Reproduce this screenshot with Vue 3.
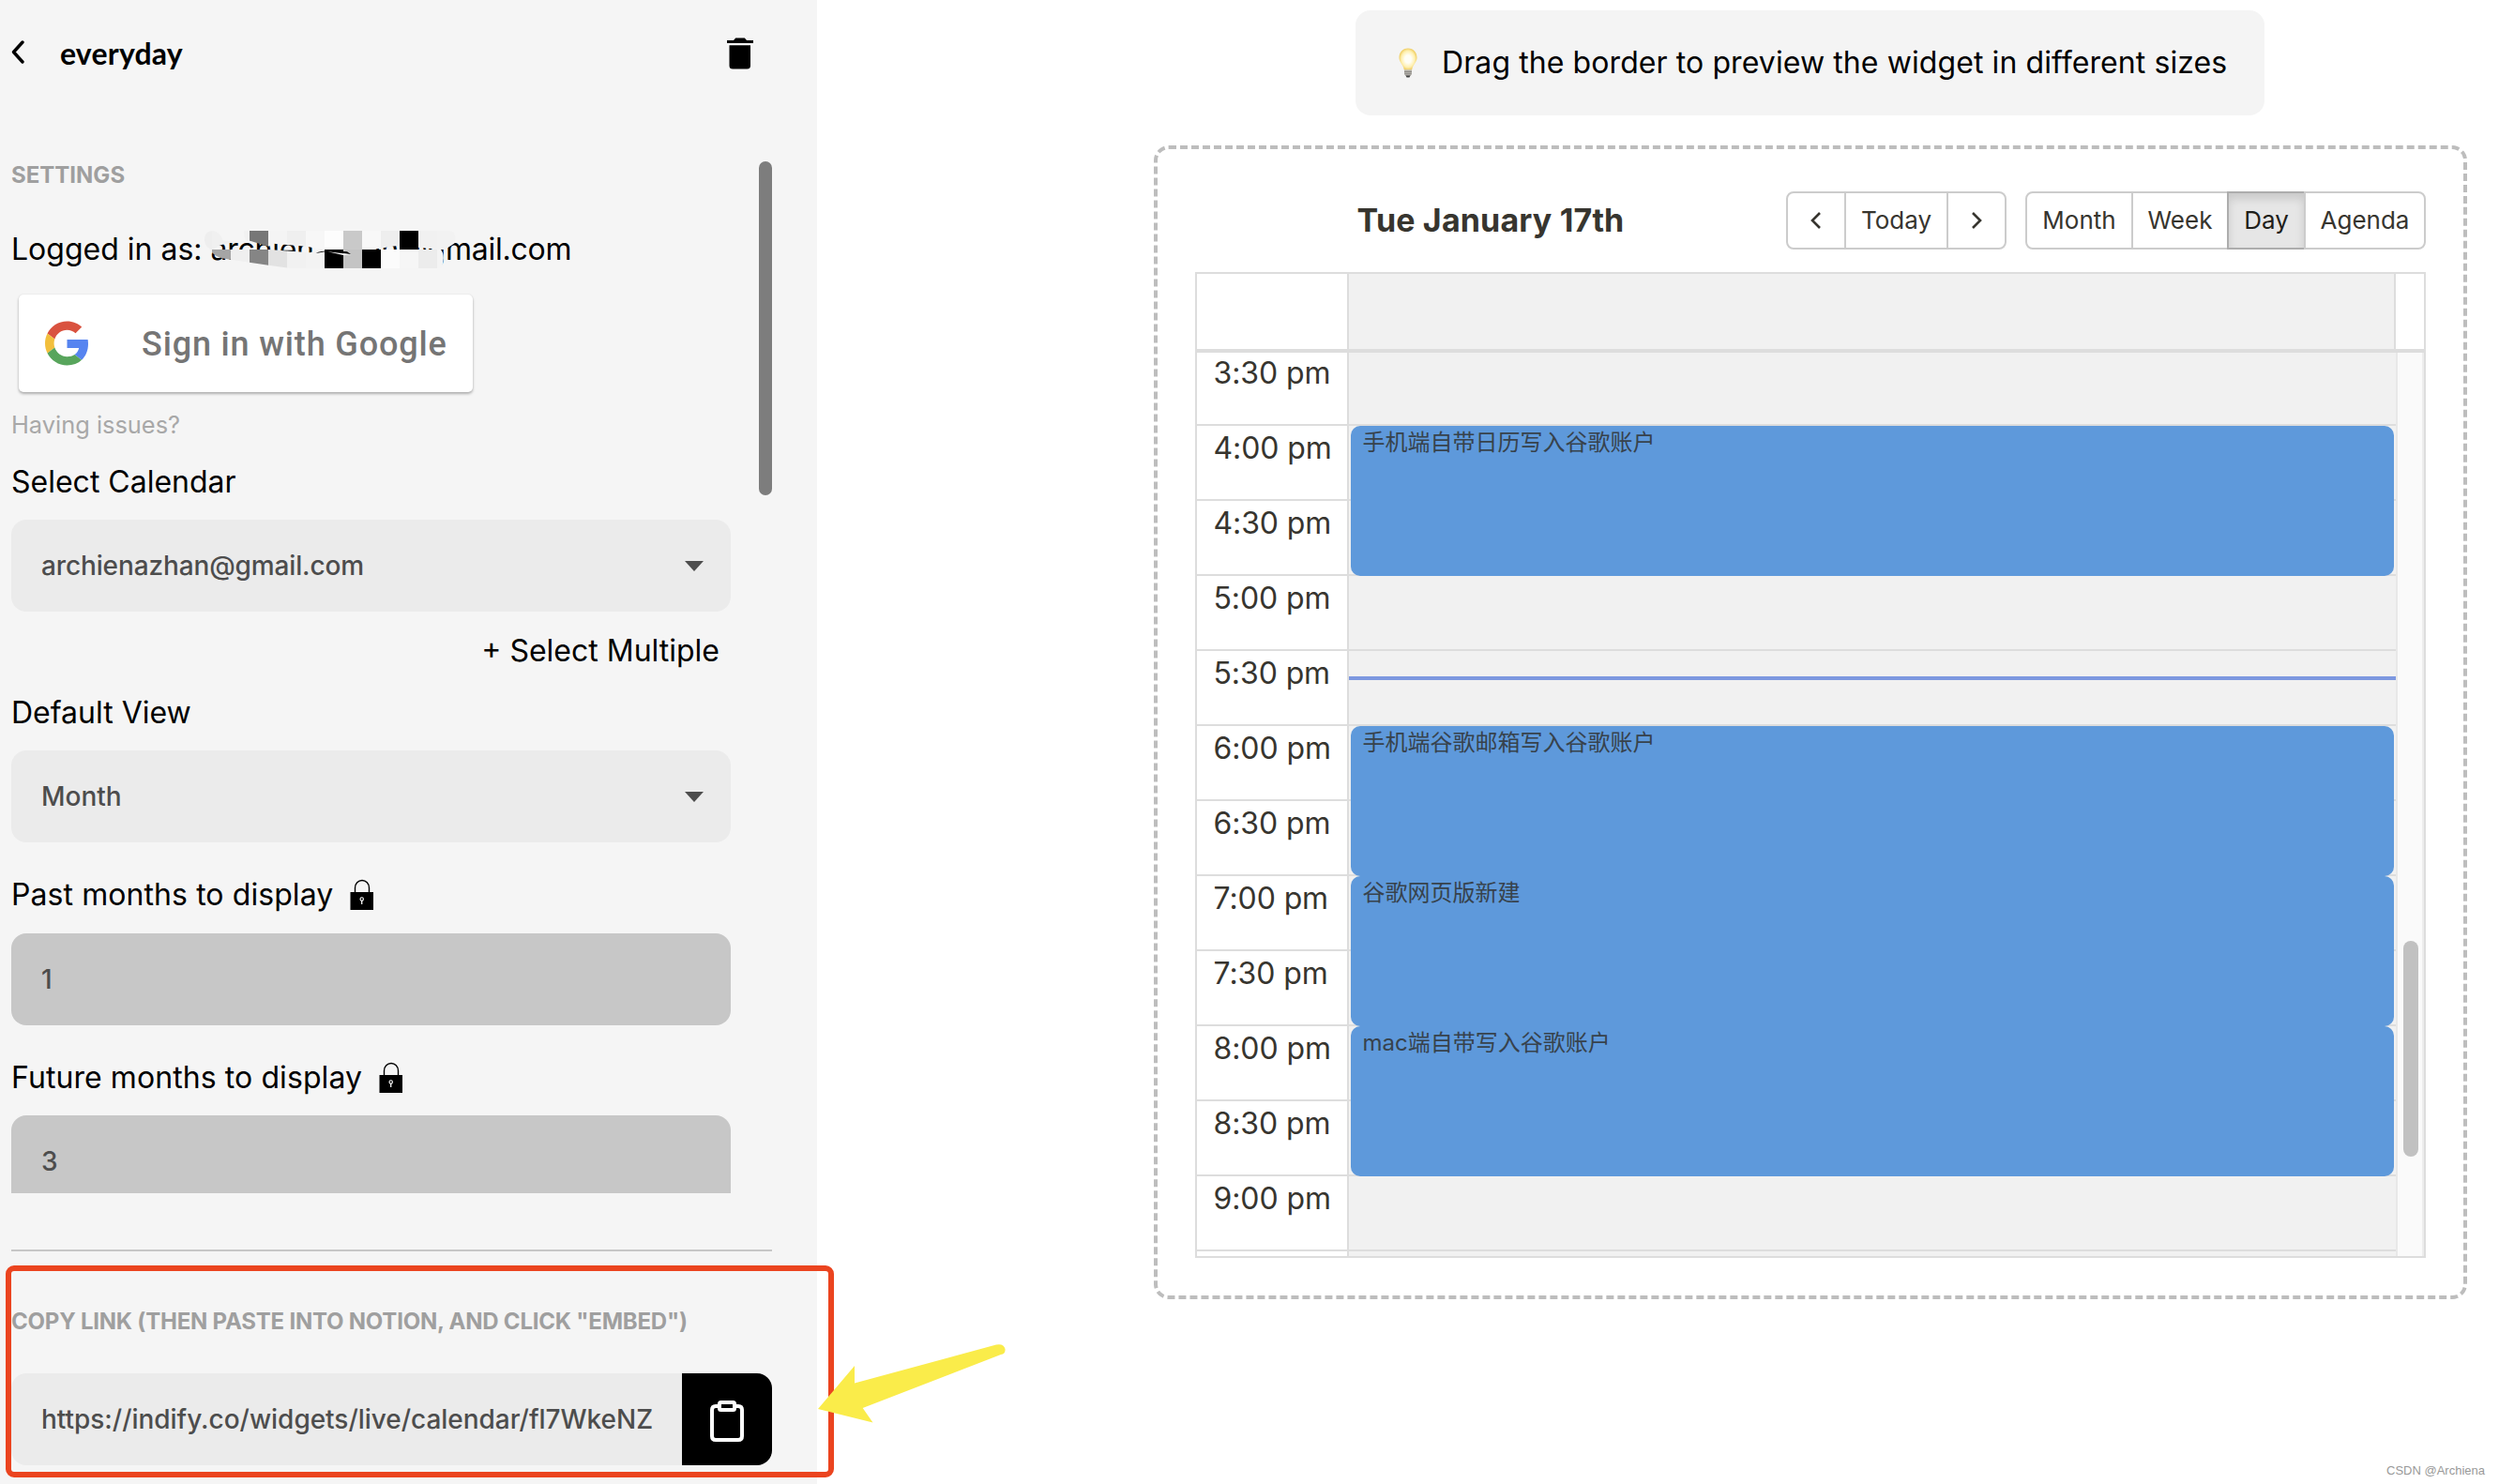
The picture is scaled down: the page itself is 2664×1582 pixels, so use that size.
<template>
  <div class="page">
    <aside class="sidebar">
      <header class="sidebar-header">
        <svg class="back" viewBox="0 0 16 28" width="16" height="28">
          <path d="M12 2 L2.500 12.500 L12 23" fill="none" stroke="#000" stroke-width="3.4" stroke-linecap="round" stroke-linejoin="round" />
        </svg>
        <h1 class="widget-name">everyday</h1>
        <svg class="trash" viewBox="0 0 28 34" width="28" height="34">
          <path d="M0 3 H7 L9.2 0.4 H18.8 L21 3 H28 V6 H0 Z" />
          <path d="M2.5 8.2 H25 V30 Q25 33.6 21.4 33.6 H6.1 Q2.5 33.6 2.5 30 Z" />
        </svg>
      </header>

      <div class="settings">
        <div class="settings-body">
          <div class="caption">SETTINGS</div>
          <div class="account">
            Logged in as: <span class="account-email">{{ email }}</span>
            <svg class="mosaic" viewBox="0 0 840 180" width="280" height="60">
              <defs>
                <clipPath id="brush-top">
                  <path d="M24 60 Q24 30 50 30 Q72 32 84 62 L160 66 Q148 50 150 30 H810 Q832 34 824 70 L790 92 L740 86 L640 78 L560 90 H400 L350 80 L245 71 L228 80 L170 62 L110 68 Q64 74 50 92 Q26 84 24 60 Z" />
                </clipPath>
                <clipPath id="brush-bottom">
                  <path d="M48 90 H230 L360 100 L400 90 H780 Q796 110 782 150 H300 L228 140 L110 123 L80 118 Q56 110 48 98 Z" />
                </clipPath>
              </defs>
              <g clip-path="url(#brush-top)">
                <rect v-for="(c, i) in mosaicTop" :key="i" :x="-12 + i * 60" y="30" width="60.5" height="60.500" :fill="c" />
              </g>
              <g clip-path="url(#brush-bottom)">
                <rect v-for="(c, i) in mosaicBottom" :key="i" :x="48 + i * 60" y="90" width="60.5" height="60" :fill="c" />
              </g>
              <rect x="648" y="30" width="60" height="60" fill="#000" />
              <path d="M380 102 Q402 88 480 97 L492 105 L410 97 Z" fill="#000" />
              <path d="M418 97 L494 106 L468 108 Z" fill="#fff" />
            </svg>
          </div>

          <button class="google">
            <svg viewBox="0 0 48 48" width="47" height="48">
              <path fill="#d9523f" d="M24 9.5c3.54 0 6.71 1.22 9.21 3.6l6.85-6.85C35.9 2.38 30.47 0 24 0 14.62 0 6.51 5.38 2.56 13.22l7.98 6.19C12.43 13.72 17.74 9.5 24 9.5z" />
              <path fill="#5684f0" d="M46.98 24.55c0-1.57-.15-3.09-.38-4.55H24v9.02h12.94c-.58 2.96-2.26 5.48-4.78 7.18l7.73 6c4.51-4.18 7.09-10.36 7.09-17.65z" />
              <path fill="#f2bf3c" d="M10.53 28.59c-.48-1.45-.76-2.99-.76-4.59s.27-3.14.76-4.59l-7.98-6.19C.92 16.46 0 20.12 0 24c0 3.88.92 7.54 2.56 10.78l7.97-6.19z" />
              <path fill="#58a55c" d="M24 48c6.48 0 11.93-2.13 15.89-5.81l-7.73-6c-2.15 1.45-4.92 2.3-8.16 2.3-6.26 0-11.57-4.22-13.47-9.91l-7.98 6.19C6.51 42.62 14.62 48 24 48z" />
            </svg>
            <span>Sign in with Google</span>
          </button>
          <a class="issues">Having issues?</a>

          <div class="label first">Select Calendar</div>
          <div class="box">
            <span class="box-email">{{ email }}</span>
            <svg class="caret" viewBox="0 0 20 11" width="20" height="11"><path d="M0 0 H20 L10 11 Z" /></svg>
          </div>
          <div class="multiple">+ Select Multiple</div>

          <div class="label second">Default View</div>
          <div class="box">
            <span>Month</span>
            <svg class="caret" viewBox="0 0 20 11" width="20" height="11"><path d="M0 0 H20 L10 11 Z" /></svg>
          </div>

          <template v-for="field in lockedFields" :key="field.name">
            <div class="label locked">
              <span>{{ field.name }}</span>
              <svg viewBox="0 0 26 34" width="26" height="34">
                <path d="M5.5 15 V9.5 A7.5 8 0 0 1 20.500 9.5 V15" fill="none" stroke="#000" stroke-width="1.4" />
                <rect x="0.500" y="14" width="24.500" height="19" />
                <circle cx="12.700" cy="21.500" r="1.700" fill="none" stroke="#fff" stroke-width="1.100" />
                <path d="M12.700 23 V27" stroke="#fff" stroke-width="1.300" />
              </svg>
            </div>
            <div class="box disabled">{{ field.value }}</div>
          </template>
        </div>
        <div class="settings-thumb"></div>
      </div>

      <footer class="copy">
        <div class="caption tight">COPY LINK (THEN PASTE INTO NOTION, AND CLICK "EMBED")</div>
        <div class="copy-row">
          <div class="copy-url">https://indify.co/widgets/live/calendar/fl7WkeNZ</div>
          <button class="copy-button">
            <svg viewBox="0 0 36 44" width="36" height="44" fill="none" stroke="#fff" stroke-width="4" stroke-linejoin="round">
              <path d="M10 6 H6 Q2 6 2 10 V38 Q2 42 6 42 H30 Q34 42 34 38 V10 Q34 6 30 6 H26" />
              <rect x="10" y="2" width="16" height="8" rx="1.500" />
            </svg>
          </button>
        </div>
      </footer>
    </aside>

    <main class="preview">
      <div class="tip">
        <svg viewBox="0 0 20 32" width="20" height="32">
          <defs>
            <radialGradient id="glow" cx="50%" cy="50%" r="50%">
              <stop offset="0.35" stop-color="#fffef5" />
              <stop offset="0.75" stop-color="#fff0b0" />
              <stop offset="1" stop-color="#f0cf66" />
            </radialGradient>
          </defs>
          <path d="M10 0.500 C4 0.500 0.500 5 0.500 10.500 C0.500 15.500 5 18 5.800 23.500 H14.200 C15 18 19.500 15.500 19.500 10.500 C19.500 5 16 0.500 10 0.500 Z" fill="url(#glow)" />
          <path d="M6 23.500 H14 V28 L12.500 30 H7.500 L6 28 Z" fill="#b3b1ab" />
          <path d="M6 25.500 H14 M6.300 27.700 H13.700" stroke="#85837e" stroke-width="0.800" />
          <path d="M7.500 29.500 H12.500 L11.500 31.500 H8.500 Z" fill="#444" />
        </svg>
        <span>Drag the border to preview the widget in different sizes</span>
      </div>

      <section class="frame">
        <div class="toolbar">
          <h2 class="date">Tue January 17th</h2>
          <div class="group nav">
            <button>
              <svg viewBox="0 0 12 18" width="12" height="18"><path d="M10 1 L2 9 L10 17" /></svg>
            </button>
            <button>Today</button>
            <button>
              <svg viewBox="0 0 12 18" width="12" height="18"><path d="M2 1 L10 9 L2 17" /></svg>
            </button>
          </div>
          <div class="group views">
            <button v-for="view in views" :key="view" :class="{ active: view === 'Day' }">{{ view }}</button>
          </div>
        </div>

        <div class="calendar">
          <div class="all-day">
            <div class="gutter-head"></div>
            <div class="day-head"></div>
            <div class="scroll-head"></div>
          </div>
          <div class="time-view">
            <div class="gutter">
              <div v-for="slot in slots" :key="slot" class="slot">{{ slot }}</div>
            </div>
            <div class="day">
              <div v-for="slot in slots" :key="slot" class="slot"></div>
              <div
                v-for="event in events"
                :key="event.title"
                class="event"
                :style="{ top: event.start * slotHeight - 2 + 'px', height: event.length * slotHeight + 'px' }"
              >
                {{ event.title }}
              </div>
              <div class="now"></div>
            </div>
            <div class="track">
              <div class="thumb"></div>
            </div>
          </div>
        </div>
      </section>
    </main>

    <div class="highlight"></div>
    <svg class="arrow" viewBox="0 0 210 90" width="210" height="90">
      <path d="M2 52 L41 6 V24.500 L192 -16.500 Q200 -18 201.500 -12 Q202 -7 197 -6 L49.700 51 L60.500 66.500 Z" fill="#faec4a" />
    </svg>
    <div class="watermark">CSDN @Archiena</div>
  </div>
</template>

<script setup>
const email = 'archienazhan@gmail.com';

const lockedFields = [
  { name: 'Past months to display', value: 1 },
  { name: 'Future months to display', value: 3 }
];

const views = ['Month', 'Week', 'Day', 'Agenda'];

const slots = [
  '3:30 pm', '4:00 pm', '4:30 pm', '5:00 pm', '5:30 pm', '6:00 pm',
  '6:30 pm', '7:00 pm', '7:30 pm', '8:00 pm', '8:30 pm', '9:00 pm'
];

// start and length are counted in half-hour slots
const slotHeight = 80;
const events = [
  { title: '手机端自带日历写入谷歌账户', start: 1, length: 2 },
  { title: '手机端谷歌邮箱写入谷歌账户', start: 5, length: 2 },
  { title: '谷歌网页版新建', start: 7, length: 2 },
  { title: 'mac端自带写入谷歌账户', start: 9, length: 2 }
];

const mosaicTop = [
  '#eeeeee', '#f0f0f0', '#f1f1f1', '#777777', '#f4f4f4', '#efefef', '#f7f7f7',
  '#fdfdfd', '#c9c9c9', '#f8f8f8', '#eeeeee', '#000000', '#f1f1f1', '#f2f2f2'
];
const mosaicBottom = [
  '#a5a5a5', '#efefef', '#858585', '#e2e2e2', '#f1f1f1', '#f3f3f3', '#000000',
  '#c4c4c4', '#000000', '#fbfbfb', '#f6f6f6', '#ececec', '#f4f4f4'
];
</script>

<style>
body {
  background: #fff;
}
</style>

<style scoped>
.page {
  position: relative;
  display: flex;
  width: 2664px;
  height: 1582px;
  overflow: hidden;
  background: #fff;
  color: #000;
  font-family: Inter, "Liberation Sans", "Noto Sans CJK SC", sans-serif;
  font-size: 32px;
}

.page * {
  box-sizing: border-box;
}

svg {
  display: block;
  flex: none;
}

button {
  font: inherit;
  margin: 0;
  padding: 0;
  border: none;
}

.sidebar {
  width: 871px;
  height: 1582px;
  flex: none;
  padding-left: 12px;
  background: #f5f5f5;
}

.sidebar-header {
  display: flex;
  align-items: center;
  height: 114px;
  padding-right: 68px;
}

.widget-name {
  flex: 1;
  margin: 0 0 0 36px;
  font-family: Lato, sans-serif;
  font-size: 32px;
  font-weight: 700;
  line-height: 40px;
  letter-spacing: 0.2px;
}

.settings {
  display: flex;
  height: 1100px;
  margin-top: 58px;
  overflow: hidden;
}

.settings-body {
  width: 767px;
}

.settings-thumb {
  width: 14px;
  height: 356px;
  margin-left: 30px;
  border-radius: 7px;
  background: #7d7d7d;
}

.caption {
  height: 28px;
  line-height: 30px;
  font-size: 24px;
  font-weight: 700;
  color: #9f9f9f;
  white-space: nowrap;
}

.caption.tight {
  letter-spacing: -0.22px;
}

.account {
  position: relative;
  height: 40px;
  margin-top: 45px;
  line-height: 42px;
}

.account-email {
  letter-spacing: -0.25px;
}

.mosaic {
  position: absolute;
  left: 198px;
  top: -9px;
}

.google {
  display: flex;
  align-items: center;
  width: 484px;
  height: 104px;
  margin: 29px 0 0 8px;
  padding-left: 28px;
  border-radius: 5px;
  background: #fff;
  box-shadow: 0 2px 3px rgba(0, 0, 0, 0.28), 0 0 2px rgba(0, 0, 0, 0.1);
  font-family: Roboto, sans-serif;
  font-size: 36px;
  font-weight: 500;
  letter-spacing: 0.84px;
  color: #757575;
}

.google span {
  margin: 2px 0 0 56px;
}

.issues {
  display: block;
  height: 32px;
  margin-top: 18px;
  font-size: 25.4px;
  line-height: 34px;
  color: #a8a8a8;
}

.label {
  height: 40px;
  line-height: 42px;
}

.label.first {
  margin-top: 25px;
}

.label.second {
  margin-top: 26px;
}

.label.locked {
  display: flex;
  gap: 18px;
  margin-top: 34px;
  letter-spacing: 0.08px;
}

.box + .label.locked {
  line-height: 43px;
}

.label.locked svg {
  margin-top: 5px;
}

.box {
  display: flex;
  align-items: center;
  justify-content: space-between;
  height: 98px;
  margin-top: 21px;
  padding: 0 29px 0 32px;
  border-radius: 16px;
  background: #ebebeb;
  font-size: 28px;
  font-weight: 500;
  color: #4d4d4d;
}

.box-email {
  letter-spacing: -0.13px;
}

.box.disabled {
  margin-top: 22.5px;
  background: #c7c7c7;
}

.caret {
  fill: #4d4d4d;
}

.multiple {
  height: 40px;
  margin: 21px 12px 0 0;
  line-height: 42px;
  text-align: right;
}

.copy {
  width: 811px;
  margin-top: 60px;
  padding-top: 60px;
  border-top: 2px solid #c7c7c7;
}

.copy-row {
  display: flex;
  height: 98px;
  margin-top: 42px;
  border-radius: 16px;
  overflow: hidden;
}

.copy-url {
  flex: 1;
  padding-left: 32px;
  background: #ebebeb;
  font-size: 28px;
  font-weight: 500;
  line-height: 98px;
  letter-spacing: -0.03px;
  color: #4d4d4d;
  white-space: nowrap;
}

.copy-button {
  display: flex;
  align-items: center;
  justify-content: center;
  width: 96px;
  background: #000;
}

.copy-button svg {
  margin-top: 4px;
}

.preview {
  display: flex;
  flex-direction: column;
  align-items: center;
  width: 1400px;
  margin-left: 359px;
  padding-top: 11px;
}

.tip {
  display: flex;
  align-items: center;
  width: 969px;
  height: 112px;
  margin-right: 1px;
  padding-left: 46px;
  border-radius: 16px;
  background: #f4f4f4;
  white-space: nowrap;
}

.tip span {
  margin: -2px 0 0 26px;
  letter-spacing: 0.09px;
}

.frame {
  width: 1400px;
  height: 1230px;
  margin-top: 32px;
  padding: 45px 40px 0;
  border: 4px dashed #bdbdbd;
  border-radius: 16px;
  color: #37352f;
}

.toolbar {
  display: flex;
  height: 62px;
}

.date {
  flex: 1;
  margin: 0;
  font-size: 34px;
  font-weight: 700;
  line-height: 62px;
  letter-spacing: 0.15px;
  text-align: center;
}

.group {
  display: flex;
  font-size: 26px;
}

.group button {
  display: flex;
  align-items: center;
  justify-content: center;
  height: 62px;
  margin-left: -2px;
  padding-bottom: 1px;
  border: 2px solid #ccc;
  background: #fff;
  color: #37352f;
}

.group button:first-child {
  margin-left: 0;
  border-radius: 8px 0 0 8px;
}

.group button:last-child {
  border-radius: 0 8px 8px 0;
}

.group svg {
  fill: none;
  stroke: #37352f;
  stroke-width: 2.6;
}

.nav button {
  width: 64px;
}

.nav button:nth-child(2) {
  width: 111px;
}

.views {
  width: 427px;
  margin-left: 20px;
}

.views button:nth-child(1) {
  width: 115px;
}

.views button:nth-child(2) {
  width: 104px;
}

.views button:nth-child(3) {
  width: 84px;
}

.views button:nth-child(4) {
  width: 130px;
}

.views button.active {
  background: #e6e6e6;
  border-color: #adadad;
  border-right-color: #ccc;
  box-shadow: inset 0 6px 10px rgba(0, 0, 0, 0.125);
  color: #1f1e1a;
}

.calendar {
  height: 1051px;
  margin-top: 24px;
  border: 2px solid #ddd;
}

.all-day {
  display: flex;
  height: 84px;
  border-bottom: 4px solid #ddd;
}

.gutter-head {
  width: 162px;
  border-right: 2px solid #ddd;
}

.day-head {
  flex: 1;
  background: #f1f1f1;
  border-right: 2px solid #ddd;
}

.scroll-head {
  width: 30px;
}

.time-view {
  display: flex;
  height: 963px;
  overflow: hidden;
}

.gutter {
  width: 162px;
  border-right: 2px solid #ddd;
}

.slot {
  height: 80px;
  border-bottom: 2px solid #ddd;
}

.slot:first-child {
  height: 78px;
}

.gutter .slot {
  padding-left: 17.5px;
  line-height: 47px;
  letter-spacing: -0.1px;
  white-space: nowrap;
}

.gutter .slot:first-child {
  line-height: 43px;
}

.day {
  position: relative;
  flex: 1;
  background: #f1f1f1;
}

.event {
  position: absolute;
  left: 2px;
  right: 2px;
  padding: 4px 12.5px;
  border-radius: 10px;
  background: #5e99db;
  font-size: 24px;
  line-height: 28px;
  color: #37424c;
}

.now {
  position: absolute;
  left: 0;
  right: 0;
  top: 345px;
  height: 4px;
  background: #7d98e0;
}

.track {
  width: 30px;
  padding: 627px 0 0 6px;
  border-left: 2px solid #e8e8e8;
  border-right: 2px solid #ededed;
  background: #fafafa;
}

.thumb {
  width: 16px;
  height: 230px;
  border-radius: 8px;
  background: #c1c1c1;
}

/* annotations over the page */
.highlight {
  position: absolute;
  left: 6px;
  top: 1349px;
  width: 883px;
  height: 226px;
  border: 6px solid #eb441f;
  border-radius: 9px;
}

.arrow {
  position: absolute;
  left: 870px;
  top: 1450px;
  overflow: visible;
}

.watermark {
  position: absolute;
  right: 15px;
  bottom: 6px;
  font-family: "Liberation Sans", Arial, sans-serif;
  font-size: 13px;
  line-height: 16px;
  color: #999;
}
</style>
